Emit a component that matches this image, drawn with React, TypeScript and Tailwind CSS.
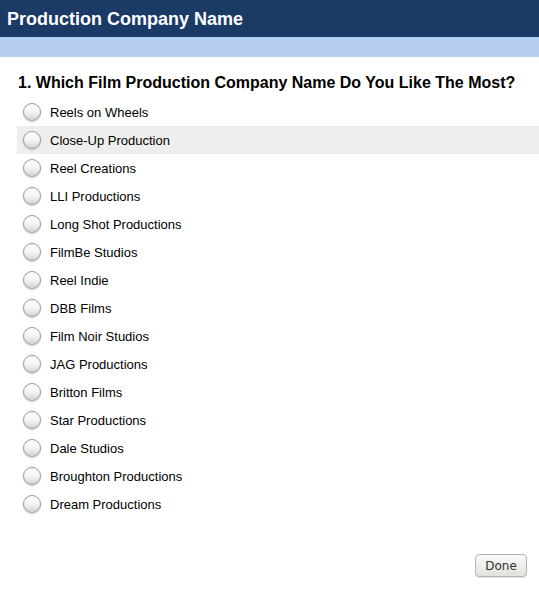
const options = [
  'Reels on Wheels',
  'Close-Up Production',
  'Reel Creations',
  'LLI Productions',
  'Long Shot Productions',
  'FilmBe Studios',
  'Reel Indie',
  'DBB Films',
  'Film Noir Studios',
  'JAG Productions',
  'Britton Films',
  'Star Productions',
  'Dale Studios',
  'Broughton Productions',
  'Dream Productions',
];

export default function App() {
  return (
    <div className="w-[539px] h-[589px] bg-white font-['Liberation_Sans',Arial,sans-serif] flex flex-col">
      {/* header */}
      <div className="h-[37px] bg-[#1b3a66] flex items-center px-[7px]">
        <h1 className="text-white text-[18px] font-bold leading-none">Production Company Name</h1>
      </div>
      <div className="h-[20px] bg-[#b4cdf1]" />

      {/* question */}
      <div className="pl-[18px] pt-[16px]">
        <h2 className="text-[16px] font-bold text-black leading-[20px]">
          1. Which Film Production Company Name Do You Like The Most?
        </h2>
      </div>

      <div className="ml-[17px] mt-[5px] flex flex-col">
        {options.map((o, i) => (
          <label
            key={o}
            className={`h-[28px] flex items-center pl-[6px] gap-[9px] cursor-pointer ${
              i === 1 ? 'bg-[#eeeeec]' : ''
            }`}
          >
            <span className="w-[18px] h-[18px] rounded-full border border-[#9c9c9c] bg-gradient-to-b from-white via-[#f5f5f5] to-[#d2d2d2] shadow-[0_1px_2px_rgba(0,0,0,0.2)]" />
            <span className="text-[13px] text-black leading-none">{o}</span>
          </label>
        ))}
      </div>

      <div className="flex justify-end pr-[12px] mt-[36px]">
        <button className="w-[52px] h-[23px] rounded-[4px] border border-[#b5b5b0] bg-gradient-to-b from-[#fafaf8] to-[#e2e2dc] shadow-[0_1px_1px_rgba(0,0,0,0.12)] text-[12px] text-[#333] font-['DejaVu_Sans',sans-serif]">
          Done
        </button>
      </div>
    </div>
  );
}
